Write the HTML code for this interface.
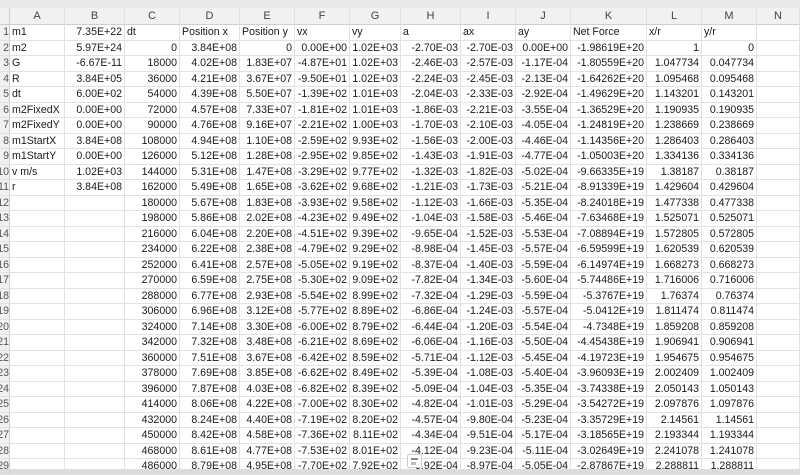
<!DOCTYPE html>
<html><head><meta charset="utf-8"><style>
*{box-sizing:border-box;margin:0;padding:0}
body{width:800px;height:474px;overflow:hidden;background:#fff;font-family:"Liberation Sans",sans-serif;font-size:10.6px;color:#1a1a1a;position:relative}
.top{position:absolute;left:0;top:0;width:800px;height:8px;background:#e9e9e9}
.sheet{position:absolute;left:0;top:8px;width:800px}
.r{display:grid;grid-template-columns:10px 55px 60px 55px 60px 55px 55px 51px 60px 55px 55px 76px 55px 55px 43px;height:15.5px;line-height:15px}
.r>div{border-right:1px solid #e2e2e2;border-bottom:1px solid #e2e2e2;padding:0 2px;white-space:nowrap;overflow:hidden;text-align:right}
.r>div.l{text-align:left}
.r>div:first-child{background:#f1f1f1;color:#555;padding:0;text-align:right;border-right:1px solid #cfcfcf;direction:rtl}
.h{height:17px;line-height:17px}
.h>div{background:#f1f1f1;text-align:center!important;color:#444;font-size:11px;border-bottom:1px solid #cfcfcf!important}
.sb{position:absolute;left:0;top:469px;width:800px;height:5px;background:#dcdcdc}
.ic{position:absolute;left:407px;top:454px;width:15px;height:14px;background:#fff;border:1px solid #ccc;border-radius:2px}
.ic:before{content:"";position:absolute;left:3px;top:3px;width:7px;height:2px;background:#889}
.ic:after{content:"";position:absolute;left:3px;top:7px;width:5px;height:3px;background:#bbc}
</style></head><body>
<div class="top"></div>
<div class="sheet">
<div class="r h"><div></div><div>A</div><div>B</div><div>C</div><div>D</div><div>E</div><div>F</div><div>G</div><div>H</div><div>I</div><div>J</div><div>K</div><div>L</div><div>M</div><div>N</div></div>
<div class="r"><div>1</div><div class="l">m1</div><div>7.35E+22</div><div class="l">dt</div><div class="l">Position x</div><div class="l">Position y</div><div class="l">vx</div><div class="l">vy</div><div class="l">a</div><div class="l">ax</div><div class="l">ay</div><div class="l">Net Force</div><div class="l">x/r</div><div class="l">y/r</div><div></div></div>
<div class="r"><div>2</div><div class="l">m2</div><div>5.97E+24</div><div>0</div><div>3.84E+08</div><div>0</div><div>0.00E+00</div><div>1.02E+03</div><div>-2.70E-03</div><div>-2.70E-03</div><div>0.00E+00</div><div>-1.98619E+20</div><div>1</div><div>0</div><div></div></div>
<div class="r"><div>3</div><div class="l">G</div><div>-6.67E-11</div><div>18000</div><div>4.02E+08</div><div>1.83E+07</div><div>-4.87E+01</div><div>1.02E+03</div><div>-2.46E-03</div><div>-2.57E-03</div><div>-1.17E-04</div><div>-1.80559E+20</div><div>1.047734</div><div>0.047734</div><div></div></div>
<div class="r"><div>4</div><div class="l">R</div><div>3.84E+05</div><div>36000</div><div>4.21E+08</div><div>3.67E+07</div><div>-9.50E+01</div><div>1.02E+03</div><div>-2.24E-03</div><div>-2.45E-03</div><div>-2.13E-04</div><div>-1.64262E+20</div><div>1.095468</div><div>0.095468</div><div></div></div>
<div class="r"><div>5</div><div class="l">dt</div><div>6.00E+02</div><div>54000</div><div>4.39E+08</div><div>5.50E+07</div><div>-1.39E+02</div><div>1.01E+03</div><div>-2.04E-03</div><div>-2.33E-03</div><div>-2.92E-04</div><div>-1.49629E+20</div><div>1.143201</div><div>0.143201</div><div></div></div>
<div class="r"><div>6</div><div class="l">m2FixedX</div><div>0.00E+00</div><div>72000</div><div>4.57E+08</div><div>7.33E+07</div><div>-1.81E+02</div><div>1.01E+03</div><div>-1.86E-03</div><div>-2.21E-03</div><div>-3.55E-04</div><div>-1.36529E+20</div><div>1.190935</div><div>0.190935</div><div></div></div>
<div class="r"><div>7</div><div class="l">m2FixedY</div><div>0.00E+00</div><div>90000</div><div>4.76E+08</div><div>9.16E+07</div><div>-2.21E+02</div><div>1.00E+03</div><div>-1.70E-03</div><div>-2.10E-03</div><div>-4.05E-04</div><div>-1.24819E+20</div><div>1.238669</div><div>0.238669</div><div></div></div>
<div class="r"><div>8</div><div class="l">m1StartX</div><div>3.84E+08</div><div>108000</div><div>4.94E+08</div><div>1.10E+08</div><div>-2.59E+02</div><div>9.93E+02</div><div>-1.56E-03</div><div>-2.00E-03</div><div>-4.46E-04</div><div>-1.14356E+20</div><div>1.286403</div><div>0.286403</div><div></div></div>
<div class="r"><div>9</div><div class="l">m1StartY</div><div>0.00E+00</div><div>126000</div><div>5.12E+08</div><div>1.28E+08</div><div>-2.95E+02</div><div>9.85E+02</div><div>-1.43E-03</div><div>-1.91E-03</div><div>-4.77E-04</div><div>-1.05003E+20</div><div>1.334136</div><div>0.334136</div><div></div></div>
<div class="r"><div>10</div><div class="l">v m/s</div><div>1.02E+03</div><div>144000</div><div>5.31E+08</div><div>1.47E+08</div><div>-3.29E+02</div><div>9.77E+02</div><div>-1.32E-03</div><div>-1.82E-03</div><div>-5.02E-04</div><div>-9.66335E+19</div><div>1.38187</div><div>0.38187</div><div></div></div>
<div class="r"><div>11</div><div class="l">r</div><div>3.84E+08</div><div>162000</div><div>5.49E+08</div><div>1.65E+08</div><div>-3.62E+02</div><div>9.68E+02</div><div>-1.21E-03</div><div>-1.73E-03</div><div>-5.21E-04</div><div>-8.91339E+19</div><div>1.429604</div><div>0.429604</div><div></div></div>
<div class="r"><div>12</div><div></div><div></div><div>180000</div><div>5.67E+08</div><div>1.83E+08</div><div>-3.93E+02</div><div>9.58E+02</div><div>-1.12E-03</div><div>-1.66E-03</div><div>-5.35E-04</div><div>-8.24018E+19</div><div>1.477338</div><div>0.477338</div><div></div></div>
<div class="r"><div>13</div><div></div><div></div><div>198000</div><div>5.86E+08</div><div>2.02E+08</div><div>-4.23E+02</div><div>9.49E+02</div><div>-1.04E-03</div><div>-1.58E-03</div><div>-5.46E-04</div><div>-7.63468E+19</div><div>1.525071</div><div>0.525071</div><div></div></div>
<div class="r"><div>14</div><div></div><div></div><div>216000</div><div>6.04E+08</div><div>2.20E+08</div><div>-4.51E+02</div><div>9.39E+02</div><div>-9.65E-04</div><div>-1.52E-03</div><div>-5.53E-04</div><div>-7.08894E+19</div><div>1.572805</div><div>0.572805</div><div></div></div>
<div class="r"><div>15</div><div></div><div></div><div>234000</div><div>6.22E+08</div><div>2.38E+08</div><div>-4.79E+02</div><div>9.29E+02</div><div>-8.98E-04</div><div>-1.45E-03</div><div>-5.57E-04</div><div>-6.59599E+19</div><div>1.620539</div><div>0.620539</div><div></div></div>
<div class="r"><div>16</div><div></div><div></div><div>252000</div><div>6.41E+08</div><div>2.57E+08</div><div>-5.05E+02</div><div>9.19E+02</div><div>-8.37E-04</div><div>-1.40E-03</div><div>-5.59E-04</div><div>-6.14974E+19</div><div>1.668273</div><div>0.668273</div><div></div></div>
<div class="r"><div>17</div><div></div><div></div><div>270000</div><div>6.59E+08</div><div>2.75E+08</div><div>-5.30E+02</div><div>9.09E+02</div><div>-7.82E-04</div><div>-1.34E-03</div><div>-5.60E-04</div><div>-5.74486E+19</div><div>1.716006</div><div>0.716006</div><div></div></div>
<div class="r"><div>18</div><div></div><div></div><div>288000</div><div>6.77E+08</div><div>2.93E+08</div><div>-5.54E+02</div><div>8.99E+02</div><div>-7.32E-04</div><div>-1.29E-03</div><div>-5.59E-04</div><div>-5.3767E+19</div><div>1.76374</div><div>0.76374</div><div></div></div>
<div class="r"><div>19</div><div></div><div></div><div>306000</div><div>6.96E+08</div><div>3.12E+08</div><div>-5.77E+02</div><div>8.89E+02</div><div>-6.86E-04</div><div>-1.24E-03</div><div>-5.57E-04</div><div>-5.0412E+19</div><div>1.811474</div><div>0.811474</div><div></div></div>
<div class="r"><div>20</div><div></div><div></div><div>324000</div><div>7.14E+08</div><div>3.30E+08</div><div>-6.00E+02</div><div>8.79E+02</div><div>-6.44E-04</div><div>-1.20E-03</div><div>-5.54E-04</div><div>-4.7348E+19</div><div>1.859208</div><div>0.859208</div><div></div></div>
<div class="r"><div>21</div><div></div><div></div><div>342000</div><div>7.32E+08</div><div>3.48E+08</div><div>-6.21E+02</div><div>8.69E+02</div><div>-6.06E-04</div><div>-1.16E-03</div><div>-5.50E-04</div><div>-4.45438E+19</div><div>1.906941</div><div>0.906941</div><div></div></div>
<div class="r"><div>22</div><div></div><div></div><div>360000</div><div>7.51E+08</div><div>3.67E+08</div><div>-6.42E+02</div><div>8.59E+02</div><div>-5.71E-04</div><div>-1.12E-03</div><div>-5.45E-04</div><div>-4.19723E+19</div><div>1.954675</div><div>0.954675</div><div></div></div>
<div class="r"><div>23</div><div></div><div></div><div>378000</div><div>7.69E+08</div><div>3.85E+08</div><div>-6.62E+02</div><div>8.49E+02</div><div>-5.39E-04</div><div>-1.08E-03</div><div>-5.40E-04</div><div>-3.96093E+19</div><div>2.002409</div><div>1.002409</div><div></div></div>
<div class="r"><div>24</div><div></div><div></div><div>396000</div><div>7.87E+08</div><div>4.03E+08</div><div>-6.82E+02</div><div>8.39E+02</div><div>-5.09E-04</div><div>-1.04E-03</div><div>-5.35E-04</div><div>-3.74338E+19</div><div>2.050143</div><div>1.050143</div><div></div></div>
<div class="r"><div>25</div><div></div><div></div><div>414000</div><div>8.06E+08</div><div>4.22E+08</div><div>-7.00E+02</div><div>8.30E+02</div><div>-4.82E-04</div><div>-1.01E-03</div><div>-5.29E-04</div><div>-3.54272E+19</div><div>2.097876</div><div>1.097876</div><div></div></div>
<div class="r"><div>26</div><div></div><div></div><div>432000</div><div>8.24E+08</div><div>4.40E+08</div><div>-7.19E+02</div><div>8.20E+02</div><div>-4.57E-04</div><div>-9.80E-04</div><div>-5.23E-04</div><div>-3.35729E+19</div><div>2.14561</div><div>1.14561</div><div></div></div>
<div class="r"><div>27</div><div></div><div></div><div>450000</div><div>8.42E+08</div><div>4.58E+08</div><div>-7.36E+02</div><div>8.11E+02</div><div>-4.34E-04</div><div>-9.51E-04</div><div>-5.17E-04</div><div>-3.18565E+19</div><div>2.193344</div><div>1.193344</div><div></div></div>
<div class="r"><div>28</div><div></div><div></div><div>468000</div><div>8.61E+08</div><div>4.77E+08</div><div>-7.53E+02</div><div>8.01E+02</div><div>-4.12E-04</div><div>-9.23E-04</div><div>-5.11E-04</div><div>-3.02649E+19</div><div>2.241078</div><div>1.241078</div><div></div></div>
<div class="r"><div>29</div><div></div><div></div><div>486000</div><div>8.79E+08</div><div>4.95E+08</div><div>-7.70E+02</div><div>7.92E+02</div><div>-3.92E-04</div><div>-8.97E-04</div><div>-5.05E-04</div><div>-2.87867E+19</div><div>2.288811</div><div>1.288811</div><div></div></div>
</div>
<div class="ic"></div>
<div class="sb"></div>
</body></html>
